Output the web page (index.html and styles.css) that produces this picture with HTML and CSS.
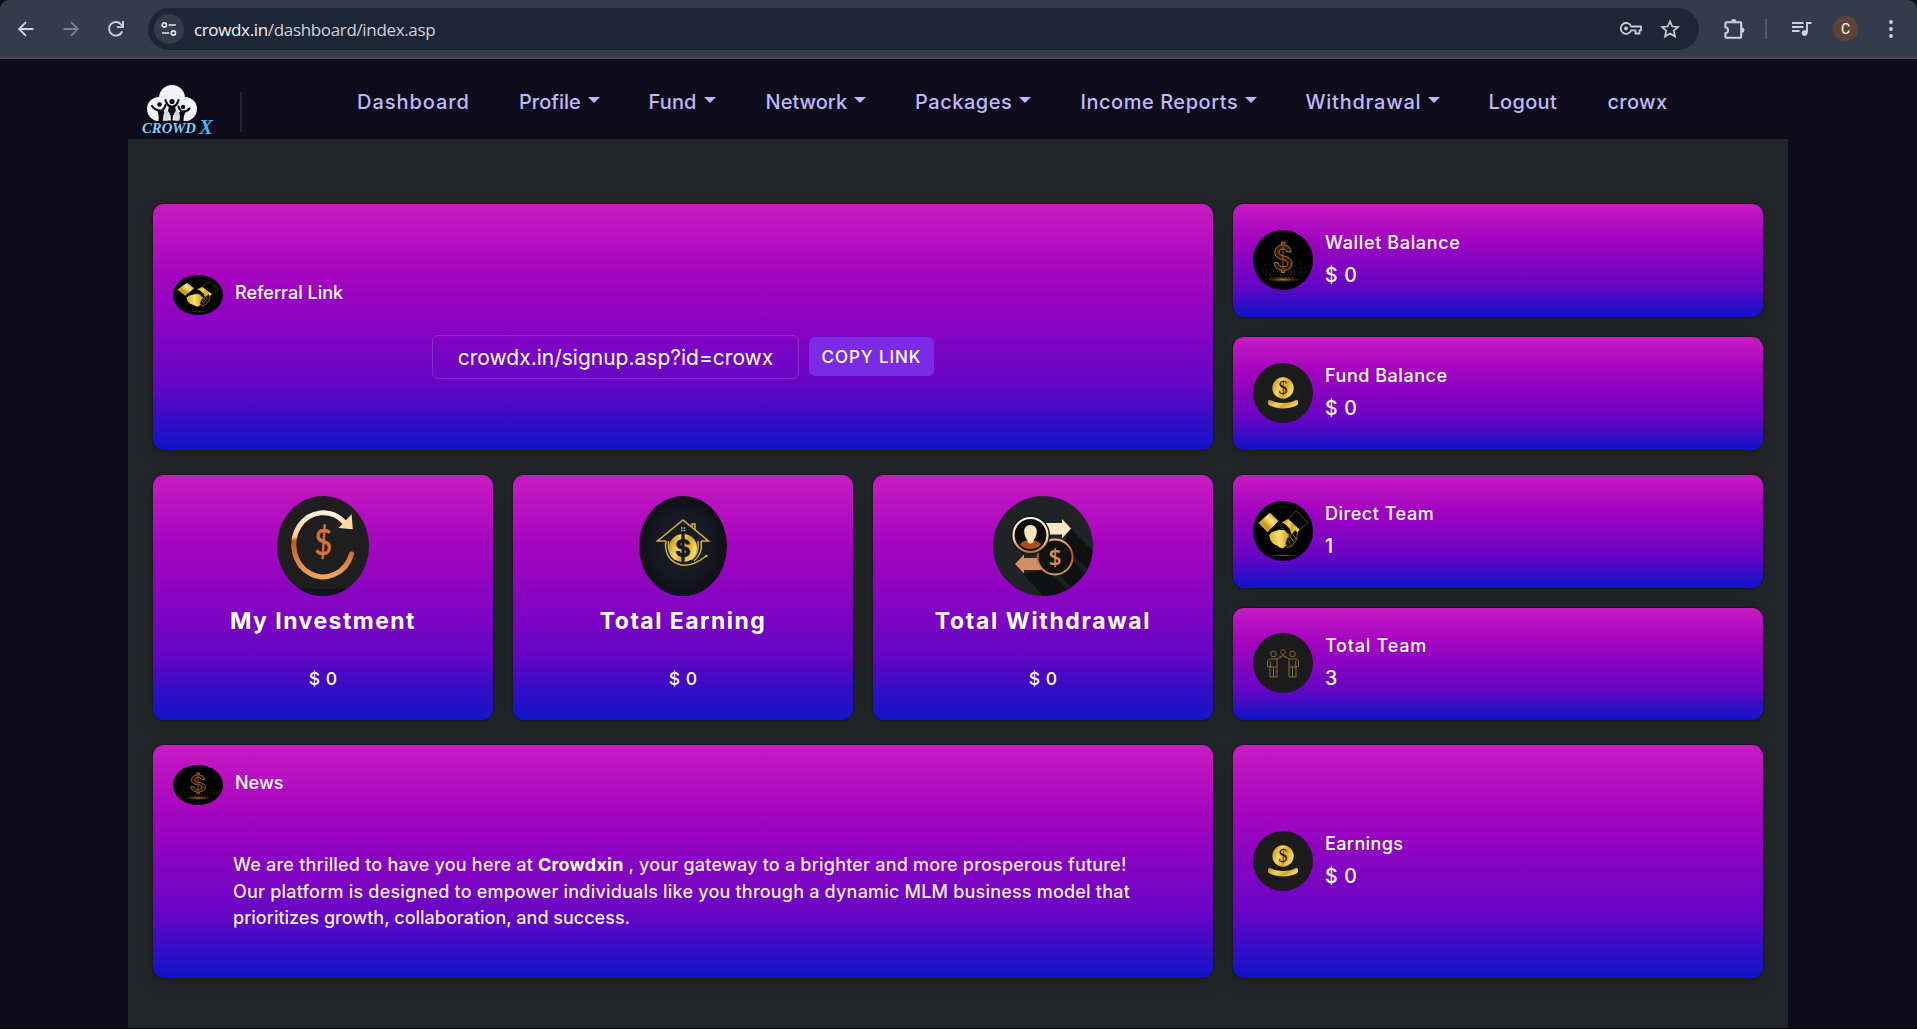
FILE: index.html
```html
<!DOCTYPE html>
<html lang="en">
<head>
<meta charset="utf-8">
<title>CrowdX Dashboard</title>
<link rel="stylesheet" href="styles.css">
</head>
<body>

<svg class="sprite" width="0" height="0" aria-hidden="true">
  <defs>
    <linearGradient id="gold" x1="0" y1="0" x2="1" y2="0.4">
      <stop offset="0" stop-color="#b8860f"/><stop offset=".45" stop-color="#f0d868"/><stop offset=".7" stop-color="#d9a520"/><stop offset="1" stop-color="#f3d968"/>
    </linearGradient>
    <linearGradient id="cuff" x1="0" y1="1" x2="1" y2="0">
      <stop offset="0" stop-color="#fbe98a"/><stop offset=".35" stop-color="#c8930c"/><stop offset=".6" stop-color="#f8e481"/><stop offset="1" stop-color="#c58f0a"/>
    </linearGradient>
    <linearGradient id="palm" x1="0" y1="0" x2="1" y2="0">
      <stop offset="0" stop-color="#e0ac1c"/><stop offset=".5" stop-color="#f6df74"/><stop offset="1" stop-color="#d39c12"/>
    </linearGradient>
    <linearGradient id="bronze" x1="0" y1="0" x2="0" y2="1">
      <stop offset="0" stop-color="#fff3df"/><stop offset=".38" stop-color="#fbc888"/><stop offset=".44" stop-color="#c4561c"/><stop offset="1" stop-color="#eda55c"/>
    </linearGradient>
    <linearGradient id="copper" x1="0" y1="0" x2="0" y2="1">
      <stop offset="0" stop-color="#f5b175"/><stop offset=".4" stop-color="#b5511f"/><stop offset="1" stop-color="#e09a62"/>
    </linearGradient>
    <linearGradient id="cream" x1="0" y1="0" x2="0" y2="1">
      <stop offset="0" stop-color="#fff6e6"/><stop offset=".6" stop-color="#fbd7a2"/><stop offset="1" stop-color="#c06a35"/>
    </linearGradient>
    <radialGradient id="glow"><stop offset="0" stop-color="#c98a2a" stop-opacity=".9"/><stop offset="1" stop-color="#5a3306" stop-opacity="0"/></radialGradient>
    <radialGradient id="night"><stop offset="0" stop-color="#1a1f2c"/><stop offset=".7" stop-color="#14171f"/><stop offset="1" stop-color="#101015"/></radialGradient>
  </defs>

  <symbol id="i-neon" viewBox="0 0 60 60" preserveAspectRatio="none">
    <rect width="60" height="60" fill="#020101"/>
    <ellipse cx="30" cy="49.5" rx="19" ry="3" fill="url(#glow)"/>
    <path d="M10 42h44M13 45h36M9 39h6M44 38h8M18 47.500h24M12 35h4M47 34h3" stroke="#8d6420" stroke-width="1" stroke-dasharray=".8 2.700" opacity=".8"/>
    <g transform="translate(3 0) scale(.9 1)">
    <path d="M28.500 15v-3h3.500v3c4 .6 6.500 3 7 7h-4.500c-.5-2-2-3-4.500-3-3 0-4.500 1.200-4.500 3.200 0 2.400 2 3 6 3.900 5.500 1.300 8.500 3.400 8.500 7.300 0 3.900-3 6.300-8 6.900v2.200h-3.500v-2.200c-5-.6-8-3.100-8.300-7.600h4.500c.4 2.500 2.300 3.900 5.500 3.900 3.300 0 5-1.200 5-3.200 0-2.300-2-2.900-6-3.800-5.300-1.200-8.300-3.200-8.300-7.100 0-4 2.900-6.900 7.600-7.500z" fill="#3a1a06" stroke="#b87f30" stroke-width="1"/>
    <path d="M30 13v29" stroke="#a8651e" stroke-width=".9"/>
    </g>
  </symbol>

  <symbol id="i-coin" viewBox="0 0 60 60" preserveAspectRatio="none">
    <rect width="60" height="60" fill="#1b1b1b"/>
    <circle cx="30" cy="25" r="10.700" fill="url(#gold)"/>
    <text x="30" y="31.200" text-anchor="middle" font-family="Liberation Serif, serif" font-size="18" fill="#171512">$</text>
    <path d="M16.500 36.700c8 4.300 19 4.300 27 0 1.800.6 2 2.800 1 5-8.500 5-20.500 5-29 0-1-2.200-.8-4.400 1-5z" fill="url(#gold)"/>
  </symbol>

  <symbol id="i-shake" viewBox="0 0 60 60" preserveAspectRatio="none">
    <rect width="60" height="60" fill="#020202"/>
    <path d="M5.300 21.700 17 11.700l8.300 8.300-10.600 11.300z" fill="url(#cuff)"/>
    <path d="M43.300 9.700 55 21.700 46.300 29 35.300 18z" fill="none" stroke="#8d7420" stroke-width=".8" stroke-dasharray="1.600 .5"/>
    <path d="M28.500 21.500 35 18l11.500 10.500L43.500 33l-5 .5-2-5.500-4-4.500z" fill="url(#gold)"/>
    <path d="M16 34l3-3 6.500-2 4-2 4.500 3 2 3-.5 4-2.500 4 .2 3.500-3.200 3-3.500-1-1.500-1.500-4.500-2-3-3.500z" fill="url(#palm)"/>
    <path d="M16.500 30l6-5 5-1.500 5 1 3.500 4-1 3.500-3.500-4-5 .3" fill="none" stroke="#16120a" stroke-width="1.500"/>
    <path d="M33.500 38l5-5 4-4 2 2.500-.8 7-4.700 6.500-4.500 1.500-2-3.500z" fill="#0b0903" stroke="#a78424" stroke-width=".8"/>
    <path d="M37 35l4 6.500M39.500 32.500l3.500 6M34.500 38.500l3.500 5.500" stroke="#a78424" stroke-width=".8"/>
    <ellipse cx="30" cy="54.300" rx="16" ry="1" fill="url(#glow)"/>
  </symbol>

  <symbol id="i-team" viewBox="0 0 60 60" preserveAspectRatio="none">
    <rect width="60" height="60" fill="#1b1b1b"/>
    <g fill="none" stroke="#86733a" stroke-width=".95">
      <circle cx="20.500" cy="21" r="2.800"/><circle cx="39.500" cy="21" r="2.800"/><circle cx="30" cy="19" r="2.300" stroke="#8b5a2b"/>
      <path d="M16.500 26h7.500l4-3M17 44V33.500h-2.500V28l2-2M17 44h7V26M20.500 34v10M17.300 28v6h6.500"/>
      <path d="M43.500 26H36l-4-3M43 44V33.500h2.500V28l-2-2M43 44h-7V26M39.500 34v10M42.700 28v6h-6.500M27.500 25l2.500-3 2.500 3"/>
    </g>
  </symbol>
</svg>

<header class="browser">
  <div class="browser__nav">
    <svg width="20" height="20" viewBox="0 0 20 20"><path d="M17.500 10H3.500M10 3.200 3.200 10l6.800 6.800" fill="none" stroke="#c6d3ea" stroke-width="1.900"/></svg>
    <svg width="20" height="20" viewBox="0 0 20 20"><path d="M2.500 10h14M10 3.200l6.800 6.800-6.800 6.800" fill="none" stroke="#76819a" stroke-width="1.900"/></svg>
    <svg width="20" height="20" viewBox="0 0 20 20"><path d="M16.200 12.300A6.800 6.800 0 1 1 15.300 5.700L17 7.500" fill="none" stroke="#c6d3ea" stroke-width="1.900"/><path d="M17 1.900v6.200h-6.200" fill="none" stroke="#c6d3ea" stroke-width="1.900"/></svg>
  </div>
  <div class="omnibox">
    <span class="omnibox__site">
      <svg width="16" height="16" viewBox="0 0 16 16" fill="none" stroke="#dfe6f2" stroke-width="1.700"><circle cx="3.300" cy="4" r="2.100"/><path d="M7.500 4h7.300M1 12h7.300"/><circle cx="12.400" cy="12" r="2.100"/></svg>
    </span>
    <span class="omnibox__url">crowdx.in<span class="omnibox__path">/dashboard/index.asp</span></span>
    <svg class="omnibox__key" width="24" height="16" viewBox="0 0 24 16" fill="none" stroke="#c9ccd3" stroke-width="1.800"><path d="M12.200 5.500H22v3.800h-1.500v3.200h-4V9.300h-4.300A5.400 5.400 0 1 1 12.200 5.500z"/><circle cx="7" cy="7.400" r="1.500" fill="#c9ccd3" stroke-width="1"/></svg>
    <svg class="omnibox__star" width="20" height="20" viewBox="0 0 20 20"><path d="M10 2.300l2.300 5.200 5.700.5-4.300 3.800 1.300 5.600-5-3-5 3 1.300-5.600L2 8l5.700-.5z" fill="none" stroke="#c9ccd3" stroke-width="1.700"/></svg>
  </div>
  <div class="browser__tools">
    <svg width="24" height="24" viewBox="0 0 24 24"><path d="M4.200 5.200h14.200a.8.8 0 0 1 .8.800v14a.8.800 0 0 1-.8.800H4.200a.8.8 0 0 1-.8-.8v-3.700c3.600-.4 3.600-5.600 0-6V6a.8.800 0 0 1 .8-.8z" fill="none" stroke="#c6d3ea" stroke-width="2"/><path d="M9.200 4.500a2.600 2.600 0 0 1 5.200 0zM19.800 10.500a2.600 2.600 0 0 1 0 5.200z" fill="#c6d3ea"/></svg>
    <span class="browser__rule"></span>
    <svg width="22" height="18" viewBox="0 0 22 18" fill="none" stroke="#c6d3ea" stroke-width="1.900"><path d="M1 3h11.500M1 7h11.500M1 11h7.500"/><path d="M16 12.500V3h4.500"/><circle cx="13.600" cy="13" r="2.500" fill="#c6d3ea" stroke-width="1"/></svg>
    <span class="avatar">C</span>
    <svg width="6" height="20" viewBox="0 0 6 20" fill="#c6d3ea"><circle cx="3" cy="3" r="1.900"/><circle cx="3" cy="10" r="1.900"/><circle cx="3" cy="17" r="1.900"/></svg>
  </div>
</header>

<div class="page">
  <div class="topbar">
    <svg class="logo" width="80" height="56" viewBox="0 0 80 56">
      <g fill="#f1f5f8"><circle cx="32" cy="16" r="13"/><circle cx="19" cy="27" r="12"/><circle cx="45" cy="27" r="12"/><path d="M12 33l3 5.500h34l3-5.500z"/></g>
      <g fill="#0e0b1a"><circle cx="19.500" cy="22.500" r="2.300"/><circle cx="32" cy="19.500" r="2.600"/><circle cx="43" cy="25" r="2.200"/></g>
      <g fill="none" stroke="#0e0b1a" stroke-width="2.200" stroke-linecap="round">
        <path d="M12 24c2 3 5 4.500 8.500 4.500 2.500 0 4-2 5-5.500"/><path d="M25.500 18c1 4.500 3.500 6.500 6.500 6.500s5.500-2 6.500-6.500"/><path d="M38.500 24.500c1 3 2.500 5 4.500 5 3 0 5-1 6.500-3"/>
      </g>
      <path d="M17.500 28.500l6-1 1 3-2 9h-4c.5-4.500 0-7.500-1-11zM29 24h6l1 5-3 4-.5 6h-1.500l-.5-6-2.500-4zM41 29l5 .5c-2 3-2.500 6-2.500 9.500h-4l-1-8z" fill="#0e0b1a"/>
      <path d="M26 26c2 4 4 8 2.500 11.500-1 1.700-4 1.700-4.800 0C22.500 34 24.500 30 26 26zM37 26c2 4 4 8 2.500 11.500-1 1.700-4 1.700-4.800 0C33.500 34 35.500 30 37 26z" fill="#d3dbe2"/>
      <text x="2" y="51" textLength="54" lengthAdjust="spacingAndGlyphs" class="logo__word">CROWD</text>
      <text x="59" y="51.500" textLength="14" lengthAdjust="spacingAndGlyphs" class="logo__x">X</text>
    </svg>
    <span class="topbar__rule"></span>
    <nav class="menu">
      <a class="menu__item s9">Dashboard</a>
      <a class="menu__item s0 menu__item--drop">Profile</a>
      <a class="menu__item s1 menu__item--drop">Fund</a>
      <a class="menu__item s0 menu__item--drop">Network</a>
      <a class="menu__item s5 menu__item--drop">Packages</a>
      <a class="menu__item s5 menu__item--drop">Income Reports</a>
      <a class="menu__item s7 menu__item--drop">Withdrawal</a>
      <a class="menu__item s3">Logout</a>
      <a class="menu__item s3">crowx</a>
    </nav>
  </div>

  <main class="board">
    <section class="card card--wide card--referral">
      <div class="card__head">
        <svg class="oval"><use href="#i-shake"/></svg>
        <h2 class="card__title">Referral Link</h2>
      </div>
      <div class="share">
        <span class="share__link">crowdx.in/signup.asp?id=crowx</span>
        <button class="share__copy">COPY LINK</button>
      </div>
    </section>

    <div class="stack">
      <section class="card stat">
        <svg class="disc"><use href="#i-neon"/></svg>
        <div><div class="stat__label s6">Wallet Balance</div><div class="stat__value">$ 0</div></div>
      </section>
      <section class="card stat">
        <svg class="disc"><use href="#i-coin"/></svg>
        <div><div class="stat__label s5">Fund Balance</div><div class="stat__value">$ 0</div></div>
      </section>
    </div>

    <section class="card tile">
      <svg class="tile__pic tile__pic--invest" viewBox="0 0 92 100">
        <rect width="92" height="100" fill="#1e1e1e"/><rect y="92.500" width="92" height="8" fill="#11111f"/>
        <path d="M74.500 58A29.500 32 0 1 1 67 26" fill="none" stroke="url(#bronze)" stroke-width="5" stroke-linecap="round"/>
        <path d="M63 31.500 74 20l1 12.500z" fill="#fbd9a3" stroke="#fbd9a3" stroke-width="1.500"/>
        <text transform="translate(46.200 59.300) scale(.86 1)" text-anchor="middle" font-family="Lato, sans-serif" font-size="36" fill="#d9733a" stroke="#d9733a" stroke-width=".6">$</text>
      </svg>
      <h3 class="tile__title">My Investment</h3>
      <div class="tile__value">$ 0</div>
    </section>

    <section class="card tile">
      <svg class="tile__pic tile__pic--earn" viewBox="0 0 88 100">
        <rect width="88" height="100" fill="url(#night)"/><rect y="92" width="88" height="8" fill="#11111f"/>
        <g fill="none" stroke="#d8b23c" stroke-width="1.500">
          <path d="M27 45h-8.500L44 24l25.500 21H62"/><path d="M53 31v-3h3v5.500"/>
          <path d="M27 45c-2 10 3 20 12 23 8 3 17 1 28-8M62 45c1.500 8-1 15-7 20"/><path d="M29.500 45c-1 8 2 15 7 19M52 64c6-4 8-11 7-19"/>
        </g>
        <path d="M42 31.200h1.500v1.500H42zM44.700 31.200h1.500v1.500h-1.500zM42 33.800h1.500v1.500H42zM44.700 33.800h1.500v1.500h-1.500z" fill="#e9cf64"/>
        <circle cx="44" cy="52" r="14" fill="url(#gold)"/><path d="M44 37v30" stroke="#151922" stroke-width="3.200"/>
        <text x="44" y="61" text-anchor="middle" font-family="Inter, sans-serif" font-weight="800" font-size="24" fill="#151922">$</text>
        <circle cx="67.500" cy="60" r="1.200" fill="#d8b23c"/>
      </svg>
      <h3 class="tile__title">Total Earning</h3>
      <div class="tile__value">$ 0</div>
    </section>

    <section class="card tile">
      <svg class="tile__pic tile__pic--withdraw" viewBox="0 0 100 100">
        <rect width="100" height="100" fill="#1f2326"/>
        <path d="M78 33l24 24v45H52L30 78l28-5z" fill="#0f1012"/><path d="M62 78l20 20M78 60l18 18" stroke="#1b1d20" stroke-width="5"/>
        <path d="M52 27h17v-4l9 9.500-9 10v-4H52z" fill="#fde8c6"/>
        <path d="M48 74H31v3.500L22 68l9-9.500V62h17z" fill="#cf8f63"/>
        <circle cx="62" cy="61" r="17.500" fill="#111214" stroke="url(#copper)" stroke-width="2"/>
        <text x="62" y="69.500" text-anchor="middle" font-family="Open Sans, sans-serif" font-weight="600" font-size="23" fill="#d98953">$</text>
        <circle cx="37.500" cy="39" r="19.500" fill="#171718"/>
        <circle cx="37.500" cy="39" r="17" fill="#0c0c0d" stroke="url(#cream)" stroke-width="2.200"/>
        <path d="M27 48.500c2-3.500 6-3.500 8-5h5c2 1.500 6 1.500 8 5-5 6-16 6-21 0z" fill="#a94d1c"/>
        <path d="M37.500 29c4.300 0 6.500 3 6.300 6.800-.2 3.700-2 7.200-3.300 8.200v2.200l-3 1.600-3-1.600V44c-1.300-1-3.100-4.500-3.300-8.200C31 32 33.200 29 37.500 29z" fill="#fde3ba"/>
      </svg>
      <h3 class="tile__title tile__title--long">Total Withdrawal</h3>
      <div class="tile__value">$ 0</div>
    </section>

    <div class="stack">
      <section class="card stat">
        <svg class="disc"><use href="#i-shake"/></svg>
        <div><div class="stat__label s5">Direct Team</div><div class="stat__value">1</div></div>
      </section>
      <section class="card stat">
        <svg class="disc"><use href="#i-team"/></svg>
        <div><div class="stat__label s7">Total Team</div><div class="stat__value">3</div></div>
      </section>
    </div>

    <section class="card card--wide card--news">
      <div class="card__head">
        <svg class="oval"><use href="#i-neon"/></svg>
        <h2 class="card__title">News</h2>
      </div>
      <p class="news">We are thrilled to have you here at <b>Crowdxin</b> , your gateway to a brighter and more prosperous future!<br>Our platform is designed to empower individuals like you through a dynamic MLM business model that<br><span class="s0">prioritizes growth, collaboration, and success.</span></p>
    </section>

    <section class="card stat">
      <svg class="disc"><use href="#i-coin"/></svg>
      <div><div class="stat__label s4">Earnings</div><div class="stat__value">$ 0</div></div>
    </section>
  </main>
</div>
</body>
</html>
```

FILE: styles.css
```css
* { box-sizing: border-box; }

body {
  margin: 0;
  height: 1029px;
  overflow: hidden;
  background: #0e0b1a;
  border-bottom: 1px solid #000;
  font-family: Inter, sans-serif;
  color: #fff;
}

h2, h3, p { margin: 0; }

.sprite { position: absolute; }

/* browser toolbar */
.browser {
  display: flex;
  align-items: center;
  height: 59px;
  padding: 0 23px 0 16px;
  background: #343c4c;
  border-bottom: 2px solid #474a53;
  border-radius: 9px 9px 0 0;
}

.browser__nav {
  display: flex;
  gap: 25px;
  width: 132px;
}

.omnibox {
  display: flex;
  align-items: center;
  width: 1552px;
  height: 42px;
  padding: 0 19px 0 6px;
  border-radius: 21px;
  background: #1d2636;
  margin-top: 1px;
}

.omnibox__site {
  display: grid;
  place-items: center;
  width: 30px;
  height: 30px;
  border-radius: 50%;
  background: #343c4c;
}

.omnibox__url {
  flex: 1;
  padding-left: 10px;
  font: 17px "Open Sans", sans-serif;
  letter-spacing: -0.34px;
  color: #f2f4f8;
}

.omnibox__path { color: #cdd1da; }

.omnibox__key { margin-right: 17px; }

.browser__tools {
  display: flex;
  align-items: center;
  flex: 1;
  margin-left: 23px;
}

.browser__rule {
  width: 2px;
  height: 20px;
  margin: 0 24px 0 19px;
  background: #535b6b;
}

.avatar {
  display: grid;
  place-items: center;
  width: 25px;
  height: 25px;
  margin: 0 30px 0 20px;
  border-radius: 50%;
  background: #5f4136;
  box-shadow: 0 0 0 1px #2a4353;
  font: 14px Roboto, sans-serif;
  color: #fff;
}

/* site header */
.page {
  width: 1660px;
  margin-left: 128px;
}

.topbar {
  display: flex;
  align-items: flex-start;
  height: 80px;
}

.logo { margin: 23px 0 0 12px; overflow: visible; }

.logo__word {
  font: italic bold 15px "Liberation Serif", serif;
  fill: #86ccf7;
}

.logo__x {
  font: italic bold 22px "Liberation Serif", serif;
  fill: #41b5f5;
}

.topbar__rule {
  width: 2px;
  height: 40px;
  margin: 33px 0 0 20px;
  background: #232130;
}

.menu {
  display: grid;
  grid-template-columns: 162px 129.5px 117px 149.5px 165.5px 225px 183px 119px 62px;
  margin: 31px 0 0 115px;
}

.menu__item {
  font-size: 20px;
  font-weight: 500;
  line-height: 24px;
  color: #bfb8ff;
  white-space: nowrap;
}

.menu__item--drop::after {
  content: "";
  display: inline-block;
  margin-left: 7px;
  vertical-align: 6px;
  border: 6px solid transparent;
  border-top-color: #bfb8ff;
  border-bottom: 0;
}

/* letter tracking steps */
.s0 { letter-spacing: 0; }
.s1 { letter-spacing: 0.12px; }
.s3 { letter-spacing: 0.3px; }
.s4 { letter-spacing: 0.37px; }
.s5 { letter-spacing: 0.53px; }
.s6 { letter-spacing: 0.64px; }
.s7 { letter-spacing: 0.76px; }
.s9 { letter-spacing: 0.95px; }

/* dashboard grid */
.board {
  display: grid;
  grid-template-columns: repeat(3, 340px) 530px;
  grid-template-rows: 246px 245px 233px;
  gap: 25px 20px;
  height: 889px;
  padding: 65px 25px 0;
  background: #212529;
}

.stack {
  display: grid;
  grid-template-rows: 1fr 1fr;
  gap: 20px;
}

.card {
  border-radius: 11px;
  background: linear-gradient(180deg, #c81bc2 0%, #a404c0 30%, #6605c4 73%, #1013c8 99%);
  box-shadow: 0 0 1px 1px rgba(10, 26, 10, 0.6), 0 7px 14px rgba(32, 32, 20, 0.4);
}

.card--wide { grid-column: span 3; }

.card__head {
  display: flex;
  align-items: flex-start;
  height: 40px;
}

.oval {
  width: 50px;
  height: 40px;
  border-radius: 50%;
}

.card__title {
  margin-left: 12px;
  font-size: 18px;
  font-weight: 550;
  line-height: 36px;
}

.card--referral { padding: 71px 20px; }

.share {
  display: flex;
  justify-content: center;
  align-items: flex-start;
  gap: 10px;
  margin-top: 20px;
}

.share__link {
  width: 367px;
  height: 44px;
  border: 1px solid rgba(255, 255, 255, 0.15);
  border-radius: 6px;
  font-size: 21px;
  line-height: 43px;
  text-align: center;
}

.share__copy {
  width: 125px;
  height: 39px;
  margin-top: 2px;
  padding: 0;
  border: 0;
  border-radius: 6px;
  background: #7b2be6;
  font: 500 17px Inter, sans-serif;
  letter-spacing: 0.93px;
  color: #fff;
}

/* small statistics */
.stat {
  display: flex;
  align-items: center;
  padding: 0 0 1px 20px;
}

.disc {
  width: 60px;
  height: 60px;
  margin-right: 12px;
  border-radius: 50%;
}

.stat__label {
  font-size: 18px;
  font-weight: 500;
  line-height: 32px;
}

.stat__value {
  margin-bottom: 2px;
  font-size: 19.500px;
  font-weight: 500;
  line-height: 32px;
  word-spacing: 1.500px;
}

/* large tiles */
.tile {
  display: flex;
  flex-direction: column;
  align-items: center;
  padding-top: 21px;
}

.tile__pic {
  height: 100px;
  border-radius: 50%;
}

.tile__pic--invest { width: 92px; }
.tile__pic--earn { width: 88px; }
.tile__pic--withdraw { width: 100px; }

.tile__title {
  margin-top: 11px;
  font-size: 23px;
  font-weight: 650;
  line-height: 28px;
  letter-spacing: 1.45px;
}

.tile__title--long { letter-spacing: 1.65px; }

.tile__value {
  margin-top: 30px;
  font-size: 17.500px;
  font-weight: 550;
  line-height: 28px;
  word-spacing: 1px;
}

/* news */
.card--news { padding: 20px; }

.news {
  padding: 47px 0 0 60px;
  font-size: 18px;
  font-weight: 450;
  line-height: 26.5px;
  letter-spacing: 0.2px;
  white-space: nowrap;
  color: rgba(255, 255, 255, 0.95);
}

.news b { font-weight: 750; color: #fff; }
```
